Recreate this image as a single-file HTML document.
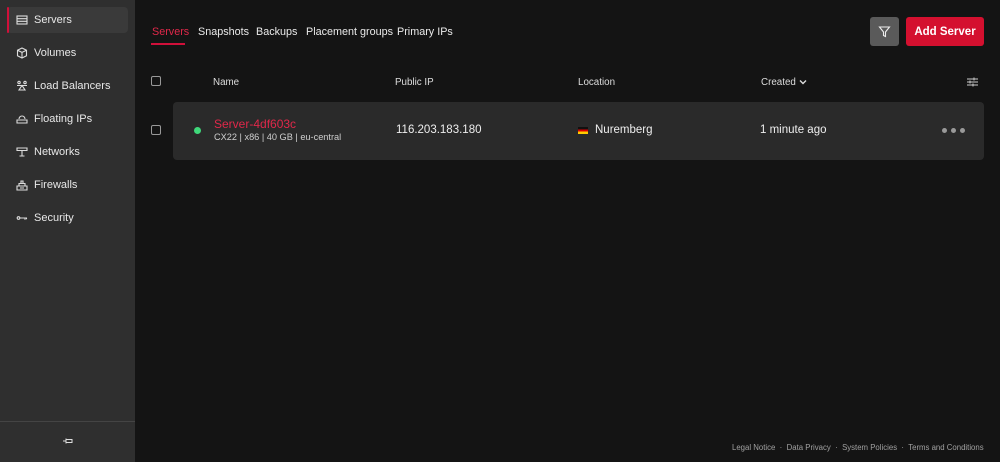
<!DOCTYPE html>
<html><head><meta charset="utf-8"><style>
*{box-sizing:border-box;margin:0;padding:0}
body{width:1000px;height:462px;background:#141414;font-family:"Liberation Sans",sans-serif;color:#e6e6e6;position:relative;overflow:hidden}
.side{position:absolute;left:0;top:0;width:135px;height:462px;background:#2f2f2f}
.nav{position:absolute;left:7px;width:121px;height:26px;border-radius:4px;font-size:11px;display:flex;align-items:center;color:#e8e8e8}
.nav.act{background:#3a3a3a}
.nav.act::before{content:"";position:absolute;left:0;top:0;width:2px;height:26px;background:#d0103a;border-radius:1px}
.nav svg{position:absolute;left:9px;top:7px}
.nav span{position:absolute;left:27px;top:7px}
.div{position:absolute;left:0;top:421px;width:135px;height:1px;background:#444}
.tab{position:absolute;top:26px;font-size:10.8px;color:#eaeaea;white-space:nowrap}
.hdr{position:absolute;top:77px;font-size:9.8px;color:#ddd;white-space:nowrap}
.cb{position:absolute;width:10px;height:10px;border:1.3px solid #999;border-radius:2px}
.row{position:absolute;left:173px;top:102px;width:811px;height:58px;background:#2a2a2a;border-radius:4px}
.ft{position:absolute;top:443px;left:732px;font-size:7.8px;color:#a0a0a0;white-space:nowrap}
</style></head><body>
<div class="side">
<div class="nav act" style="top:7px"><svg width="12" height="12" viewBox="0 0 12 12" fill="none" stroke="#ddd" stroke-width="1.1"><rect x="1" y="2" width="10" height="8"/><path d="M1 4.7h10M1 7.3h10"/></svg><span>Servers</span></div>
<div class="nav" style="top:40px"><svg width="12" height="12" viewBox="0 0 12 12" fill="none" stroke="#ddd" stroke-width="1.1"><path d="M6 1l4.5 2.2v5.6L6 11 1.5 8.8V3.2z M1.5 3.2L6 5.4l4.5-2.2M6 5.4V11"/></svg><span>Volumes</span></div>
<div class="nav" style="top:73px"><svg width="12" height="12" viewBox="0 0 12 12" fill="none" stroke="#ddd" stroke-width="1.1"><circle cx="3" cy="2.5" r="1.2"/><circle cx="9" cy="2.5" r="1.2"/><path d="M1 5.5h10M6 5.5L3 10h6z"/></svg><span>Load Balancers</span></div>
<div class="nav" style="top:106px"><svg width="12" height="12" viewBox="0 0 12 12" fill="none" stroke="#ddd" stroke-width="1.1"><path d="M3 6a3 3 0 0 1 6 0M1 7h10v3H1z"/></svg><span>Floating IPs</span></div>
<div class="nav" style="top:139px"><svg width="12" height="12" viewBox="0 0 12 12" fill="none" stroke="#ddd" stroke-width="1.1"><path d="M1 2h10v2.5H1zM6 4.5V10M3.5 10h5"/></svg><span>Networks</span></div>
<div class="nav" style="top:172px"><svg width="12" height="12" viewBox="0 0 12 12" fill="none" stroke="#ddd" stroke-width="1.1"><path d="M1 7h10v4H1zM3 7V4.5h6V7M5 4.5V2h2v2.5M4 9h4"/></svg><span>Firewalls</span></div>
<div class="nav" style="top:205px"><svg width="12" height="12" viewBox="0 0 12 12" fill="none" stroke="#ddd" stroke-width="1.1"><circle cx="2.5" cy="6" r="1.3"/><path d="M4 6h7M9 6v1.7M10.5 6v1.2"/></svg><span>Security</span></div>
<div class="div"></div>
<svg style="position:absolute;left:63px;top:437px" width="10" height="8" viewBox="0 0 10 8" fill="none" stroke="#ddd" stroke-width="1"><path d="M0 4h3M3 1.5v5M3 2.5h6v3H3"/></svg>
</div>
<div class="tab" style="left:152px;color:#e0284a">Servers</div>
<div style="position:absolute;left:151px;top:43px;width:34px;height:2px;background:#d0103a"></div>
<div class="tab" style="left:198px">Snapshots</div>
<div class="tab" style="left:256px">Backups</div>
<div class="tab" style="left:306px">Placement groups</div>
<div class="tab" style="left:397px">Primary IPs</div>
<div style="position:absolute;left:870px;top:17px;width:29px;height:29px;background:#5a5a5a;border-radius:3px"><svg style="position:absolute;left:8px;top:8px" width="13" height="13" viewBox="0 0 13 13" fill="none" stroke="#eee" stroke-width="1.1"><path d="M1.5 2h10L7.5 7v4.5l-2-1V7z"/></svg></div>
<div style="position:absolute;left:906px;top:17px;width:78px;height:29px;background:#d4102f;border-radius:3px;color:#fff;font-size:11.5px;font-weight:bold;display:flex;align-items:center;justify-content:center">Add Server</div>
<div class="cb" style="left:151px;top:76px"></div>
<div class="hdr" style="left:213px">Name</div>
<div class="hdr" style="left:395px">Public IP</div>
<div class="hdr" style="left:578px">Location</div>
<div class="hdr" style="left:761px">Created <svg width="8" height="6" viewBox="0 0 8 6" fill="none" stroke="#ddd" stroke-width="1.4"><path d="M1 1.5l3 3 3-3"/></svg></div>
<svg style="position:absolute;left:967px;top:77px" width="11" height="10" viewBox="0 0 11 10" fill="none" stroke="#ccc" stroke-width="1"><path d="M0 2h11M0 5h11M0 8h11"/><path d="M7 0.5v3M3 3.5v3M6 6.5v3"/></svg>
<div class="row"></div>
<div class="cb" style="left:151px;top:125px"></div>
<div style="position:absolute;left:194px;top:127px;width:7px;height:7px;border-radius:50%;background:#3fd87a"></div>
<div style="position:absolute;left:214px;top:117px;font-size:12px;color:#e0284a">Server-4df603c</div>
<div style="position:absolute;left:214px;top:132px;font-size:9.2px;color:#cfcfcf">CX22 | x86 | 40 GB | eu-central</div>
<div style="position:absolute;left:396px;top:124px;font-size:11.5px;color:#eee">116.203.183.180</div>
<div style="position:absolute;left:578px;top:127px;width:10px;height:7px;background:linear-gradient(#111 33%,#d00 33%,#d00 66%,#fc0 66%)"></div>
<div style="position:absolute;left:595px;top:124px;font-size:11.5px;color:#eee">Nuremberg</div>
<div style="position:absolute;left:760px;top:124px;font-size:11.5px;color:#eee">1 minute ago</div>
<div style="position:absolute;left:942px;top:128px;display:flex;gap:4px"><i style="width:5px;height:5px;border-radius:50%;background:#999"></i><i style="width:5px;height:5px;border-radius:50%;background:#999"></i><i style="width:5px;height:5px;border-radius:50%;background:#999"></i></div>
<div class="ft">Legal Notice &nbsp;·&nbsp; Data Privacy &nbsp;·&nbsp; System Policies &nbsp;·&nbsp; Terms and Conditions</div>
</body></html>
